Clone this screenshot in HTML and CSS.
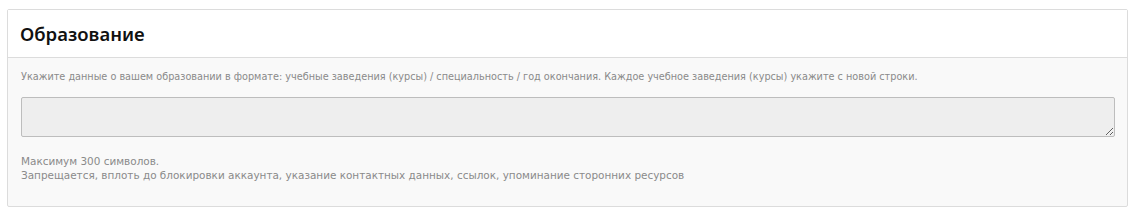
FILE: index.html
```html
<!DOCTYPE html>
<html lang="ru">
<head>
<meta charset="utf-8">
<link rel="stylesheet" href="styles.css">
</head>
<body>
<section class="card">
  <header class="card-head">
    <h2 class="card-title">Образование</h2>
  </header>
  <div class="card-body">
    <p class="desc">Укажите данные о вашем образовании в формате: учебные заведения (курсы) / специальность / год окончания. Каждое учебное заведения (курсы) укажите с новой строки.</p>
    <textarea class="field"></textarea>
    <p class="hint">Максимум 300 символов.<br>Запрещается, вплоть до блокировки аккаунта, указание контактных данных, ссылок, упоминание сторонних ресурсов</p>
  </div>
</section>
</body>
</html>
```
FILE: styles.css
```css
html, body {
  margin: 0;
  padding: 0;
  background: #ffffff;
}
body {
  padding: 9px 5px 0 7px;
  font-family: "DejaVu Sans", Verdana, sans-serif;
}
.card {
  border: 1px solid #dcdcdc;
  border-radius: 2px;
  background: #f9f9f9;
  height: 198px;
  box-sizing: border-box;
}
.card-head {
  background: #ffffff;
  border-bottom: 1px solid #dcdcdc;
  height: 48px;
  box-sizing: border-box;
  padding: 0 12px;
  display: flex;
  align-items: center;
}
.card-title {
  margin: 0;
  font-size: 18.5px;
  font-weight: 600;
  color: #111;
  font-family: "Noto Sans", "DejaVu Sans", sans-serif;
}
.card-body {
  padding: 12px 12px 0 13px;
}
.desc {
  margin: 0;
  font-size: 9.7px;
  line-height: 14px;
  color: #8a8a8a;
}
.field {
  display: block;
  box-sizing: border-box;
  width: 100%;
  margin: 13px 0 0;
  padding: 4px;
  height: 40px;
  border: 1px solid #bdbdbd;
  border-radius: 2px;
  background: #eeeeee;
  resize: vertical;
  font-family: inherit;
}
.hint {
  margin: 17px 0 0;
  font-size: 10.45px;
  line-height: 14px;
  color: #8a8a8a;
}
```
